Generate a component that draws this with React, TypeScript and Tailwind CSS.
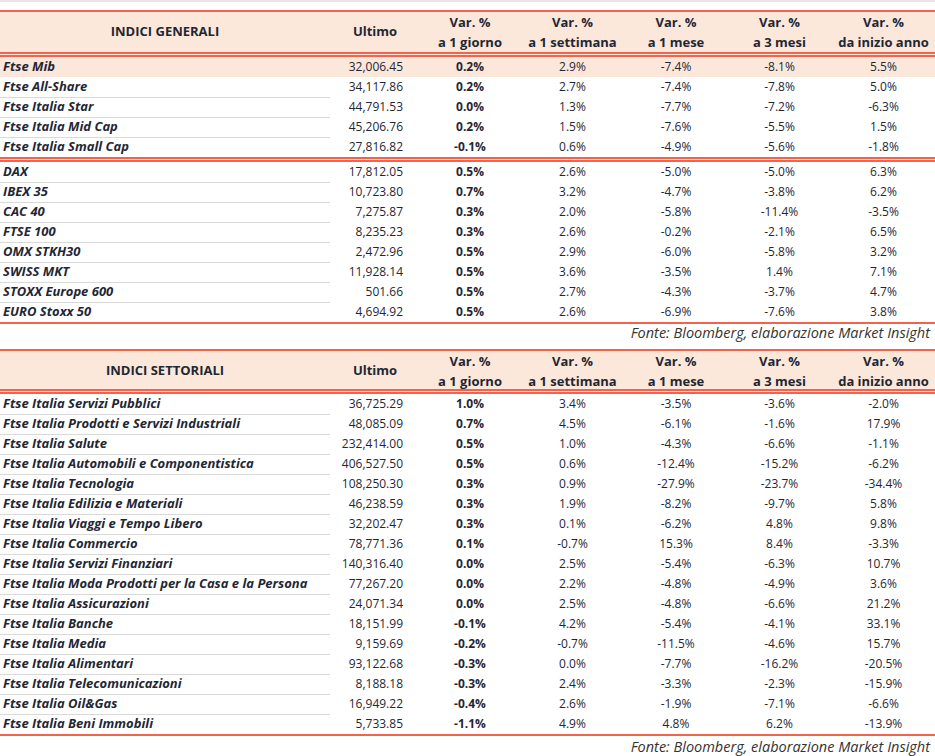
import React from 'react';

type Row = [string, string, string, string, string, string, string];

const generali: Row[] = [
  ['Ftse Mib', '32,006.45', '0.2%', '2.9%', '-7.4%', '-8.1%', '5.5%'],
  ['Ftse All-Share', '34,117.86', '0.2%', '2.7%', '-7.4%', '-7.8%', '5.0%'],
  ['Ftse Italia Star', '44,791.53', '0.0%', '1.3%', '-7.7%', '-7.2%', '-6.3%'],
  ['Ftse Italia Mid Cap', '45,206.76', '0.2%', '1.5%', '-7.6%', '-5.5%', '1.5%'],
  ['Ftse Italia Small Cap', '27,816.82', '-0.1%', '0.6%', '-4.9%', '-5.6%', '-1.8%'],
];

const esteri: Row[] = [
  ['DAX', '17,812.05', '0.5%', '2.6%', '-5.0%', '-5.0%', '6.3%'],
  ['IBEX 35', '10,723.80', '0.7%', '3.2%', '-4.7%', '-3.8%', '6.2%'],
  ['CAC 40', '7,275.87', '0.3%', '2.0%', '-5.8%', '-11.4%', '-3.5%'],
  ['FTSE 100', '8,235.23', '0.3%', '2.6%', '-0.2%', '-2.1%', '6.5%'],
  ['OMX STKH30', '2,472.96', '0.5%', '2.9%', '-6.0%', '-5.8%', '3.2%'],
  ['SWISS MKT', '11,928.14', '0.5%', '3.6%', '-3.5%', '1.4%', '7.1%'],
  ['STOXX Europe 600', '501.66', '0.5%', '2.7%', '-4.3%', '-3.7%', '4.7%'],
  ['EURO Stoxx 50', '4,694.92', '0.5%', '2.6%', '-6.9%', '-7.6%', '3.8%'],
];

const settoriali: Row[] = [
  ['Ftse Italia Servizi Pubblici', '36,725.29', '1.0%', '3.4%', '-3.5%', '-3.6%', '-2.0%'],
  ['Ftse Italia Prodotti e Servizi Industriali', '48,085.09', '0.7%', '4.5%', '-6.1%', '-1.6%', '17.9%'],
  ['Ftse Italia Salute', '232,414.00', '0.5%', '1.0%', '-4.3%', '-6.6%', '-1.1%'],
  ['Ftse Italia Automobili e Componentistica', '406,527.50', '0.5%', '0.6%', '-12.4%', '-15.2%', '-6.2%'],
  ['Ftse Italia Tecnologia', '108,250.30', '0.3%', '0.9%', '-27.9%', '-23.7%', '-34.4%'],
  ['Ftse Italia Edilizia e Materiali', '46,238.59', '0.3%', '1.9%', '-8.2%', '-9.7%', '5.8%'],
  ['Ftse Italia Viaggi e Tempo Libero', '32,202.47', '0.3%', '0.1%', '-6.2%', '4.8%', '9.8%'],
  ['Ftse Italia Commercio', '78,771.36', '0.1%', '-0.7%', '15.3%', '8.4%', '-3.3%'],
  ['Ftse Italia Servizi Finanziari', '140,316.40', '0.0%', '2.5%', '-5.4%', '-6.3%', '10.7%'],
  ['Ftse Italia Moda Prodotti per la Casa e la Persona', '77,267.20', '0.0%', '2.2%', '-4.8%', '-4.9%', '3.6%'],
  ['Ftse Italia Assicurazioni', '24,071.34', '0.0%', '2.5%', '-4.8%', '-6.6%', '21.2%'],
  ['Ftse Italia Banche', '18,151.99', '-0.1%', '4.2%', '-5.4%', '-4.1%', '33.1%'],
  ['Ftse Italia Media', '9,159.69', '-0.2%', '-0.7%', '-11.5%', '-4.6%', '15.7%'],
  ['Ftse Italia Alimentari', '93,122.68', '-0.3%', '0.0%', '-7.7%', '-16.2%', '-20.5%'],
  ['Ftse Italia Telecomunicazioni', '8,188.18', '-0.3%', '2.4%', '-3.3%', '-2.3%', '-15.9%'],
  ['Ftse Italia Oil&Gas', '16,949.22', '-0.4%', '2.6%', '-1.9%', '-7.1%', '-6.6%'],
  ['Ftse Italia Beni Immobili', '5,733.85', '-1.1%', '4.9%', '4.8%', '6.2%', '-13.9%'],
];

const periods = ['a 1 giorno', 'a 1 settimana', 'a 1 mese', 'a 3 mesi', 'da inizio anno'];

// fixed sheet columns: name | ultimo | 1g | 1s | 1m | 3m | ytd
const cols = 'grid grid-cols-[330px_90px_100px_105px_102px_105px_103px]';

function RedLine() {
  return <div className="h-[2px] bg-[#f1634c]" />;
}

function DoubleLine() {
  return (
    <div>
      <div className="h-[2px] bg-[#f1634c]" />
      <div className="h-[1px] bg-[#fce8da]" />
      <div className="h-[2px] bg-[#f1634c]" />
    </div>
  );
}

function Header({ title, tall }: { title: string; tall?: boolean }) {
  return (
    <div className={`${cols} bg-[#fce8da] font-bold text-[13px] ${tall ? 'h-[40px]' : 'h-[38px]'}`}>
      <div className="flex items-center justify-center">{title}</div>
      <div className="flex items-center justify-center">Ultimo</div>
      {periods.map((p) => (
        <div key={p} className="flex flex-col justify-center items-center leading-[20px]">
          <span>Var. %</span>
          <span>{p}</span>
        </div>
      ))}
    </div>
  );
}

function DataRow({ row, highlight, line }: { row: Row; highlight?: boolean; line: boolean }) {
  return (
    <div className={`${cols} h-[20px] items-center text-[12px] ${highlight ? 'bg-[#fce8da]' : ''}`}>
      <div
        className={`h-full flex items-center pl-[3px] font-bold italic text-[13px] whitespace-nowrap ${
          line ? 'border-b border-[#d9d9d9]' : ''
        }`}
      >
        {row[0]}
      </div>
      <div className="text-right pr-[17px]">{row[1]}</div>
      <div className="text-center font-bold">{row[2]}</div>
      <div className="text-center">{row[3]}</div>
      <div className="text-center">{row[4]}</div>
      <div className="text-center">{row[5]}</div>
      <div className="text-center">{row[6]}</div>
    </div>
  );
}

function Fonte({ h }: { h: string }) {
  return (
    <div className={`${h} flex items-center justify-end pr-[5px] italic text-[14.5px] text-[#333]`}>
      Fonte: Bloomberg, elaborazione Market Insight
    </div>
  );
}

export default function App() {
  return (
    <div
      className="w-[935px] h-[756px] bg-white text-[#1f2734] overflow-hidden border-t-2 border-[#e6e6e6]"
      style={{ fontFamily: '"Open Sans", Lato, sans-serif' }}
    >
      <div className="pt-[8px]">
        <RedLine />
        <Header title="INDICI GENERALI" tall />
        <DoubleLine />
        {generali.map((r, i) => (
          <DataRow key={r[0]} row={r} highlight={i === 0} line={i > 0 && i < generali.length - 1} />
        ))}
        <DoubleLine />
        {esteri.map((r, i) => (
          <DataRow key={r[0]} row={r} line={i < esteri.length - 1} />
        ))}
        <RedLine />
        <Fonte h="h-[17px]" />
      </div>
      <div className="pt-[8px]">
        <RedLine />
        <Header title="INDICI SETTORIALI" />
        <DoubleLine />
        {settoriali.map((r, i) => (
          <DataRow key={r[0]} row={r} line={i < settoriali.length - 1} />
        ))}
        <RedLine />
        <Fonte h="h-[21px]" />
      </div>
    </div>
  );
}
